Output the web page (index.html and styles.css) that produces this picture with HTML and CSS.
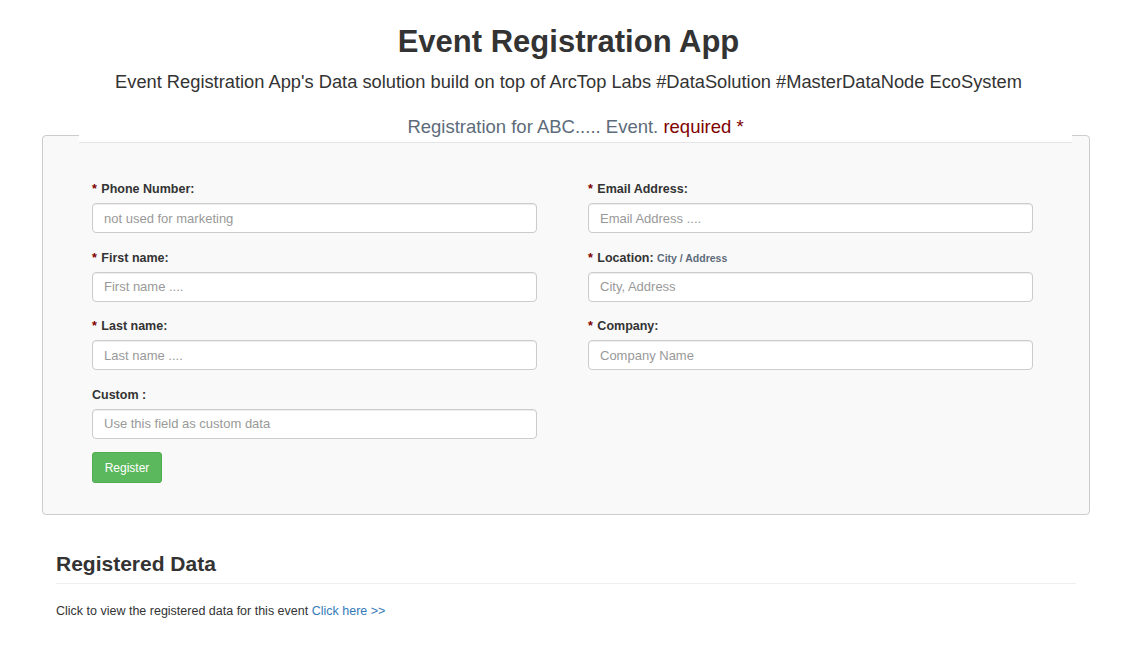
FILE: index.html
```html
<!DOCTYPE html>
<html lang="en">
<head>
<meta charset="utf-8">
<title>Event Registration App</title>
<link rel="stylesheet" href="styles.css">
</head>
<body>
<header class="page-header">
  <h1 class="title">Event Registration App</h1>
  <p class="subtitle">Event Registration App's Data solution build on top of ArcTop Labs #DataSolution #MasterDataNode EcoSystem</p>
</header>

<section class="reg-panel">
  <div class="reg-legend"><span class="legend-text">Registration for ABC..... Event.</span> <span class="req">required *</span></div>
  <form class="reg-form">
    <div class="grid">
      <div class="group">
        <label><span class="star">*</span> Phone Number:</label>
        <input type="text" placeholder="not used for marketing">
      </div>
      <div class="group">
        <label><span class="star">*</span> Email Address:</label>
        <input type="text" placeholder="Email Address ....">
      </div>
      <div class="group">
        <label><span class="star">*</span> First name:</label>
        <input type="text" placeholder="First name ....">
      </div>
      <div class="group">
        <label><span class="star">*</span> Location: <small class="hint">City / Address</small></label>
        <input type="text" placeholder="City, Address">
      </div>
      <div class="group">
        <label><span class="star">*</span> Last name:</label>
        <input type="text" placeholder="Last name ....">
      </div>
      <div class="group">
        <label><span class="star">*</span> Company:</label>
        <input type="text" placeholder="Company Name">
      </div>
      <div class="group">
        <label>Custom :</label>
        <input type="text" placeholder="Use this field as custom data">
      </div>
    </div>
    <button type="button" class="btn-register">Register</button>
  </form>
</section>

<section class="registered">
  <h3 class="reg-title">Registered Data</h3>
  <p class="reg-text">Click to view the registered data for this event <a href="#" class="link">Click here &gt;&gt;</a></p>
</section>
</body>
</html>
```

FILE: styles.css
```css
* { box-sizing: border-box; }
html, body { margin: 0; padding: 0; background: #fff; }
body {
  font-family: "Liberation Sans", Arial, Helvetica, sans-serif;
  color: #333;
  width: 1137px;
}

.page-header { text-align: center; padding-top: 25px; }
.title {
  margin: 0;
  font-size: 31px;
  font-weight: bold;
  line-height: 34px;
  color: #333;
}
.subtitle {
  margin: 11px 0 0;
  font-size: 18.3px;
  line-height: 23px;
  color: #333;
}

.reg-panel {
  margin: 42px 47px 0 42px;
  border: 1px solid #ccc;
  border-radius: 4px;
  background: #f9f9f9;
}
.reg-legend {
  margin: -24px 17px 0 36px;
  height: 31px;
  line-height: 30px;
  background: #fff;
  border-bottom: 1px solid #e5e5e5;
  text-align: center;
  font-size: 18.5px;
}
.legend-text { color: #5d6b7a; }
.req { color: #800000; }

.reg-form { padding: 38px 55px 30.5px 49px; }
.grid {
  display: grid;
  grid-template-columns: 445px 445px;
  column-gap: 51px;
}
.group { margin-bottom: 16.5px; }
.group label {
  display: block;
  font-size: 12.5px;
  font-weight: bold;
  line-height: 17px;
  margin-bottom: 5px;
  color: #333;
}
.star { color: #800000; margin-right: 1px; }
.hint { font-size: 10.5px; color: #5d6b7a; font-weight: bold; }
.group input {
  display: block;
  width: 100%;
  height: 30px;
  padding: 0 11px;
  border: 1px solid #ccc;
  border-radius: 4px;
  background: #fff;
  font-family: inherit;
  font-size: 13px;
  color: #555;
  box-shadow: inset 0 1px 1px rgba(0,0,0,0.075);
}
.group input::placeholder { color: #999; }

.btn-register {
  display: block;
  margin-top: -3px;
  width: 70px;
  height: 31px;
  padding: 0;
  border: 1px solid #4cae4c;
  border-radius: 3px;
  background: #5cb85c;
  color: #fff;
  font-family: inherit;
  font-size: 12px;
}

.registered { margin: 37px 61px 0 56px; }
.reg-title {
  margin: 0;
  font-size: 21px;
  font-weight: bold;
  line-height: 23px;
  padding-bottom: 8px;
  border-bottom: 1px solid #eee;
  color: #333;
}
.reg-text {
  margin: 19px 0 0;
  font-size: 12.5px;
  line-height: 17px;
  color: #333;
}
.link { color: #337ab7; text-decoration: none; }
```
